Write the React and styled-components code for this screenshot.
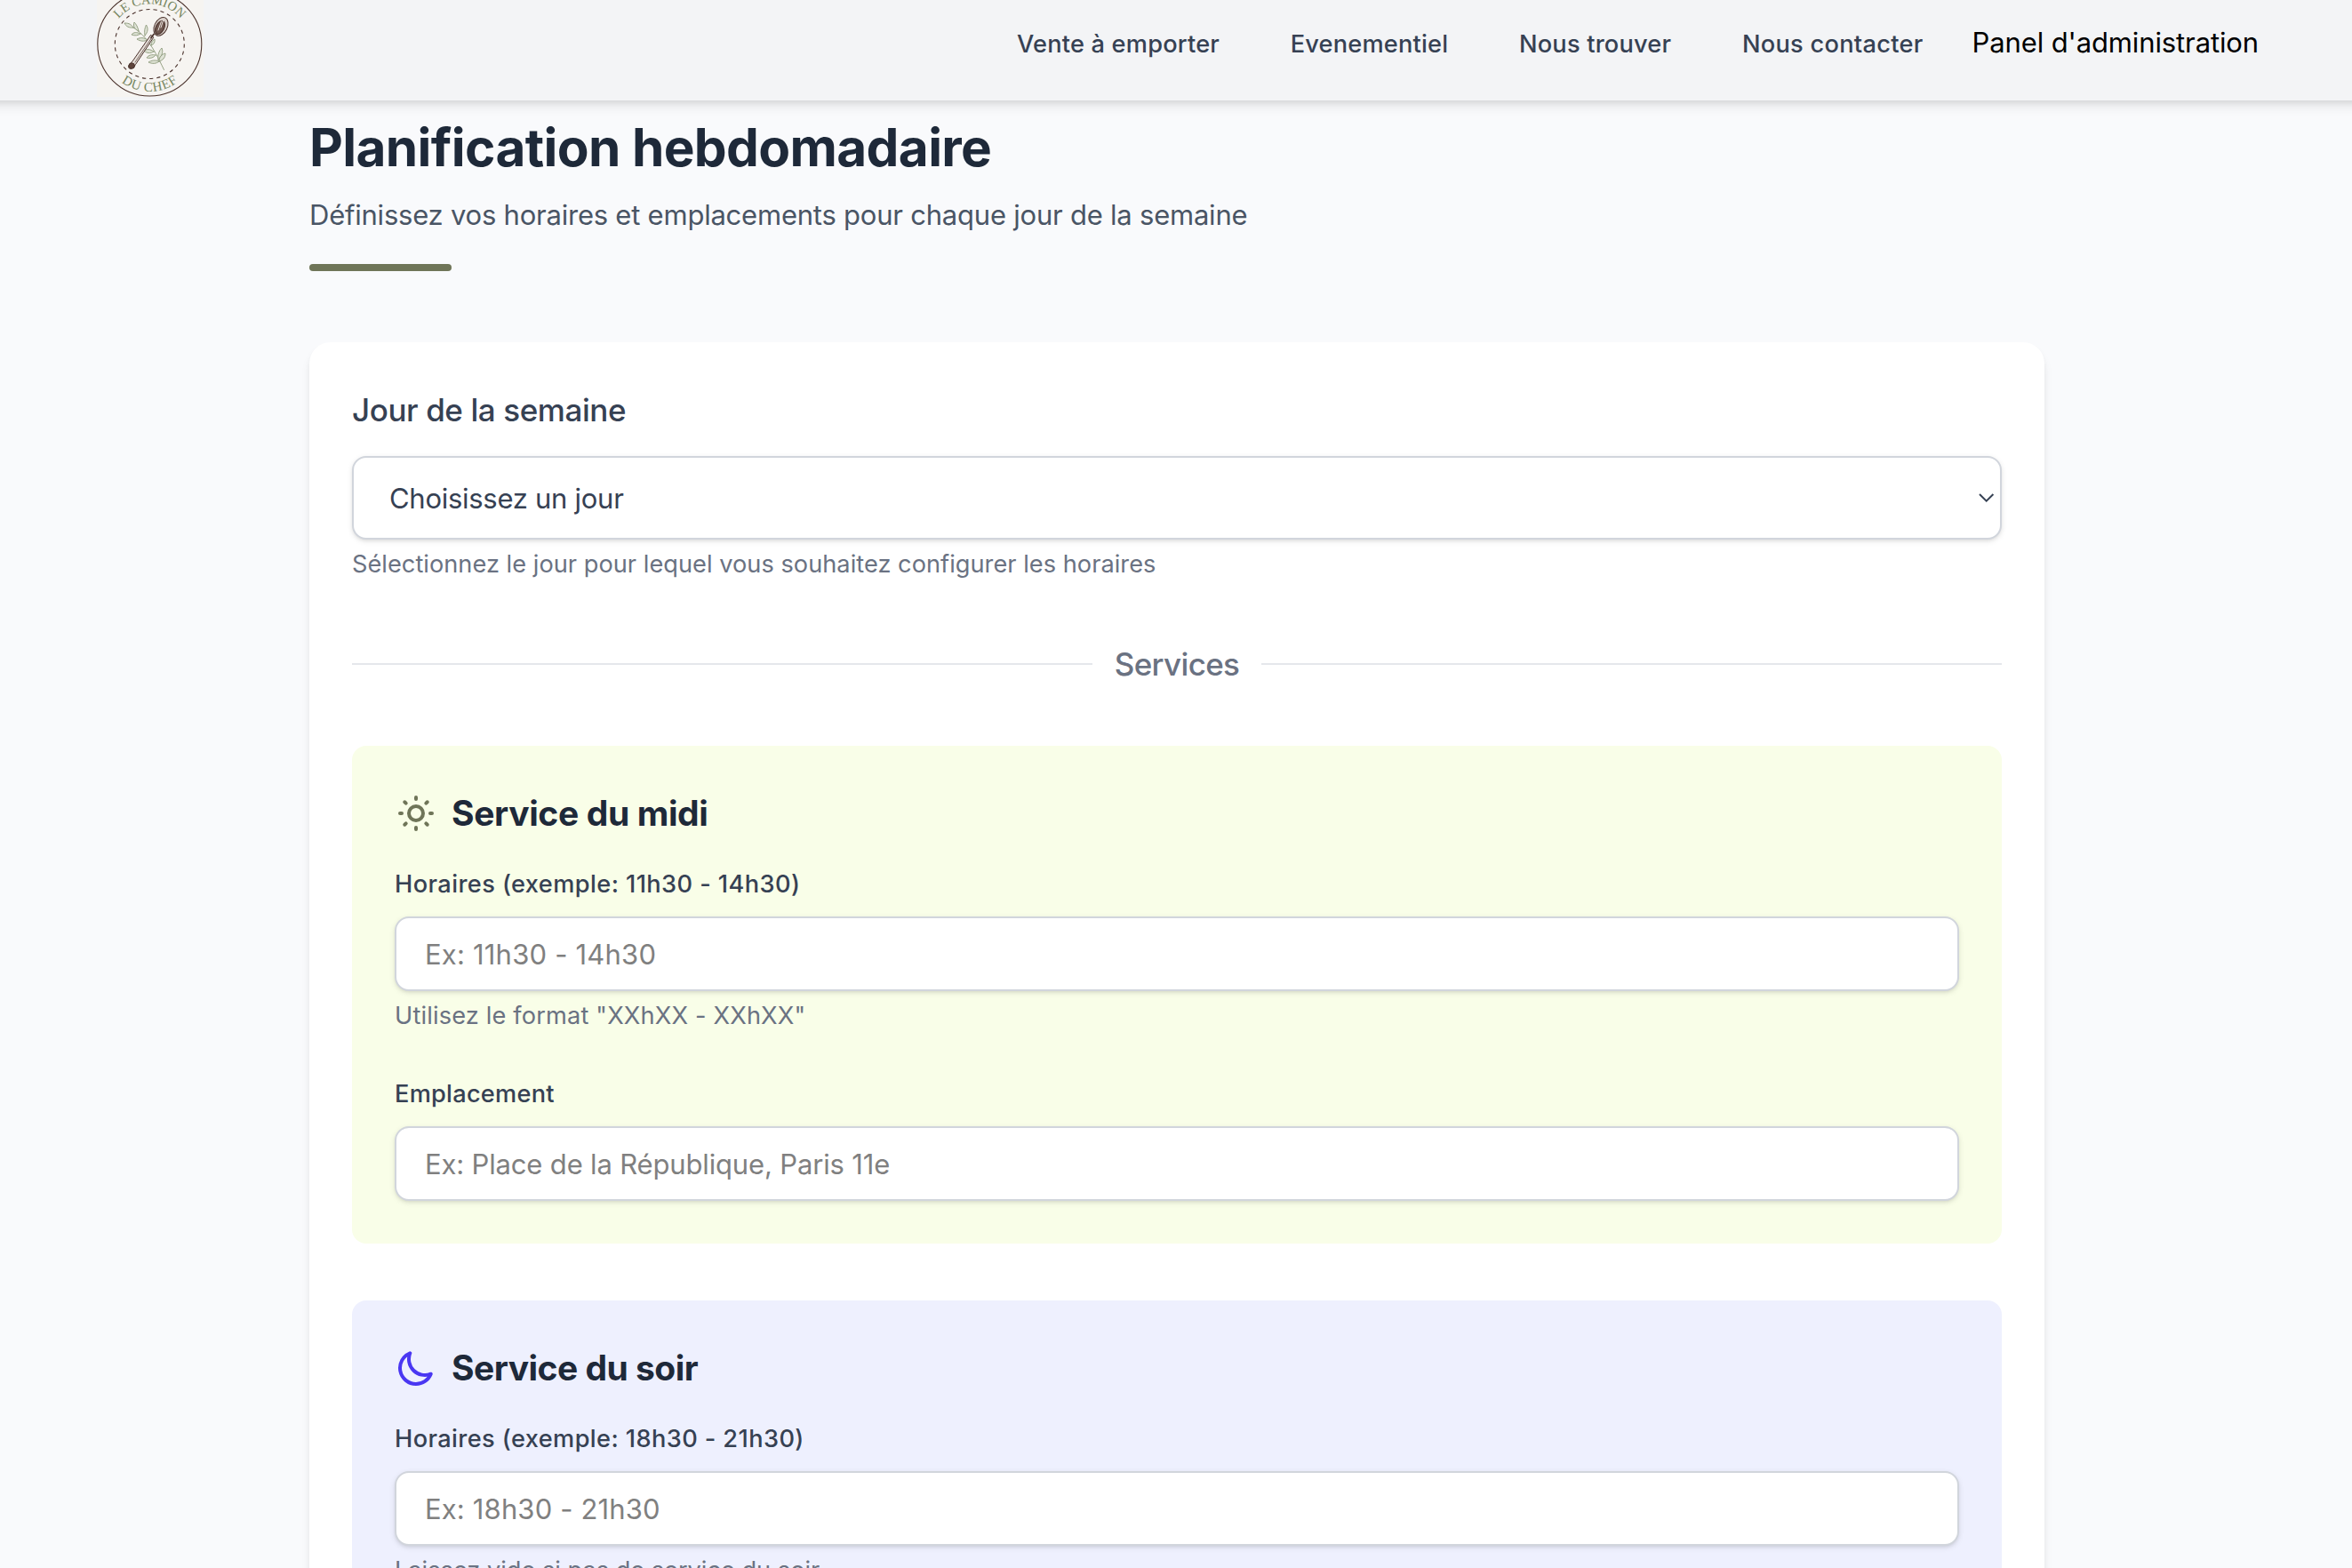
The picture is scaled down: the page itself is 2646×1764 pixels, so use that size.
import React from "react";
import styled, { createGlobalStyle } from "styled-components";

const GlobalStyle = createGlobalStyle`
  *, *::before, *::after { box-sizing: border-box; }
  body {
    margin: 0;
    background: #f9fafb;
    font-family: Inter, "Liberation Sans", sans-serif;
    color: #1e2939;
  }
  h1, h2, p { margin: 0; }
`;

const Page = styled.div`
  height: 1764px;
  overflow: hidden;
  background: #f9fafc;
`;

const Header = styled.header`
  display: flex;
  align-items: center;
  justify-content: space-between;
  position: relative;
  height: 128px;
  margin: -15px -20px 0;
  padding: 0 125px 0 129px;
  background: #f3f4f6;
  box-shadow: 0 8px 12px -2px rgba(0, 0, 0, 0.1), 0 4px 8px -4px rgba(0, 0, 0, 0.1);
`;

const LogoArt = styled.svg`
  display: block;
  flex: none;
  width: 120px;
  height: 120px;
`;

const Nav = styled.nav`
  display: flex;
  align-items: center;
  gap: 79.7px;
  white-space: nowrap;
`;

const NavLink = styled.a`
  padding-top: 1px;
  font-size: 27.2px;
  font-weight: 500;
  line-height: 40px;
  letter-spacing: ${(p) => p.$track}px;
  color: #364153;
`;

const AdminLink = styled.a`
  margin-left: -24.7px;
  padding-bottom: 2px;
  font-size: 31px;
  line-height: 48px;
  letter-spacing: -0.12px;
  color: #000;
`;

const Main = styled.main`
  padding: 17px 346px 0 348px;
`;

const Title = styled.h1`
  font-size: 58.5px;
  font-weight: 700;
  line-height: 72px;
  letter-spacing: -0.65px;
  color: #1e2939;
`;

const Subtitle = styled.p`
  margin-top: 15px;
  font-size: 31px;
  line-height: 49px;
  letter-spacing: -0.224px;
  color: #4a5565;
`;

const Accent = styled.div`
  width: 160px;
  height: 8px;
  margin: 31px 0 80px;
  border-radius: 4px;
  background: #6f7558;
`;

const Card = styled.section`
  padding: 48px;
  border-radius: 24px;
  background: #fff;
  box-shadow: 0 8px 12px -2px rgba(0, 0, 0, 0.1), 0 4px 8px -4px rgba(0, 0, 0, 0.1);
`;

const DayLabel = styled.div`
  font-size: 35px;
  font-weight: 500;
  line-height: 56px;
  letter-spacing: -0.411px;
  color: #364153;
`;

const DaySelect = styled.div`
  display: flex;
  align-items: center;
  justify-content: space-between;
  height: 94px;
  margin-top: 24px;
  padding: 0 6px 0 40px;
  border: 2px solid #d1d5dc;
  border-radius: 16px;
  background: #fff;
  box-shadow: 0 2px 6px rgba(0, 0, 0, 0.1), 0 2px 4px -2px rgba(0, 0, 0, 0.1);
  font-size: 31px;
  letter-spacing: -0.28px;
  color: #364153;
`;

const Hint = styled.p`
  margin-top: 8px;
  font-size: 27.2px;
  line-height: 40px;
  letter-spacing: ${(p) => p.$track}px;
  color: #6a7282;
`;

const Divider = styled.div`
  display: flex;
  align-items: center;
  gap: 24px;
  height: 56px;
  margin: 64px 0;
  font-size: 35px;
  font-weight: 500;
  letter-spacing: -0.65px;
  color: #6a7282;

  &::before, &::after {
    content: "";
    flex: 1;
    height: 2px;
    background: #e5e7eb;
  }

  span {
    width: 142px;
    text-align: center;
  }
`;

const Panel = styled.section`
  padding: 48px;
  border-radius: 16px;
  background: ${(p) => p.$tint};

  & + & { margin-top: 64px; }
`;

const PanelHeading = styled.div`
  display: flex;
  align-items: center;
  gap: 16px;
  height: 56px;
  margin-bottom: 32px;

  svg {
    width: 48px;
    height: 48px;
    stroke: ${(p) => p.$stroke};
  }
`;

const PanelTitle = styled.h2`
  font-size: 39px;
  font-weight: 700;
  line-height: 56px;
  letter-spacing: ${(p) => p.$track}px;
`;

const Field = styled.div`
  & + & { margin-top: 48px; }
`;

const FieldLabel = styled.label`
  display: block;
  font-size: 27.2px;
  font-weight: 500;
  line-height: 40px;
  letter-spacing: ${(p) => p.$track}px;
  color: #364153;
`;

const TextInput = styled.input`
  display: block;
  width: 100%;
  height: 84px;
  margin-top: 16px;
  padding: 0 32px;
  border: 2px solid #d1d5dc;
  border-radius: 16px;
  outline: none;
  background: #fff;
  box-shadow: 0 2px 6px rgba(0, 0, 0, 0.1), 0 2px 4px -2px rgba(0, 0, 0, 0.1);
  font-family: inherit;
  font-size: 31px;
  letter-spacing: ${(p) => p.$track}px;

  &::placeholder { color: #808080; opacity: 1; }
`;

function Logo() {
  return (
    <LogoArt viewBox="0 0 120 120" fill="none" aria-label="Le Camion du Chef">
      <defs>
        <path id="arc-top" d="M14.3 60.5A45 45 0 0 1 104.3 60.5" />
        <path id="arc-bottom" d="M5.8 60.5A53.5 53.5 0 0 0 112.8 60.5" />
      </defs>
      <rect width="120" height="120" fill="#f6f4f1" />
      <circle cx="59.3" cy="60.5" r="58.5" stroke="#4b332d" strokeWidth="1.1" />
      <circle cx="59.3" cy="60.5" r="39" stroke="#4b332d" strokeWidth="1.1" strokeDasharray="4.2 3.96" />
      <g fontFamily="'Liberation Serif', serif" fontSize="15" fill="#76865f" textAnchor="middle">
        <text textLength="80" fontSize="14.5"><textPath href="#arc-top" startOffset="50%" textLength="80">LE CAMION</textPath></text>
        <text textLength="68"><textPath href="#arc-bottom" startOffset="50%" textLength="68">DU CHEF</textPath></text>
      </g>
      <g stroke="#8c9a7b" strokeWidth="0.9" strokeLinecap="round" fill="#dfe3d6">
        <path d="M32 37.5C42 41 50 48 57 57S69 76 75.500 89.500" fill="none" />
        <path d="M41 42c-3-5-7-5-10-5 2 4 5 5.500 10 5z" />
        <path d="M47 46c-1-5-3-8-5-10-1.500 4 0 8 5 10z" />
        <path d="M49 49c-4-2-8-2-10 1 4 1.500 7 1 10-1z" />
        <path d="M54 51c-1-5 0-9 1.500-12 2.500 4 2 8-1.500 12z" />
        <path d="M57 56c-4-3-8-3-12-1 4 2.500 8 3 12 1z" />
        <path d="M61 62c0-4 2-6 4-7 .5 4-1 6-4 7z" />
        <path d="M64 69c-4-3-8-3-11-1 3 3 7 3.500 11 1z" />
        <path d="M66 73c-4-1-8 0-10 3 4 1 8 0 10-3z" />
        <path d="M69 78c-1-5 1-10 4-13 2 5 0 9-4 13z" />
        <path d="M70 80c0-5 3-8 7-9 0 5-3 8-7 9z" />
        <path d="M70 80c-4-2-9-1-12 1 4 2 9 2 12-1z" />
      </g>
      <g stroke="#4b332d" strokeLinecap="round">
        <path d="M63.500 53.500L43.500 83.500C41 88 37 90 35.800 87S38 82 40 80L60.500 50.500z" fill="#e6dfd9" strokeWidth="1" />
        <path d="M62 53L43 81" strokeWidth="0.7" />
        <ellipse cx="72" cy="40.800" rx="7.200" ry="11" transform="rotate(26 72 40.800)" fill="#d9d0ca" strokeWidth="1" />
        <ellipse cx="71" cy="42" rx="4.600" ry="8" transform="rotate(26 71 42)" fill="#6f5850" strokeWidth="1.200" />
        <path d="M75 33l-3 9M72.500 35l-3.500 10" stroke="#e6dfd9" strokeWidth="1" />
        <path d="M64 49.500l-3 4" strokeWidth="1.800" />
        <circle cx="39.300" cy="85" r="3.200" fill="#5d443c" strokeWidth="1" />
      </g>
    </LogoArt>
  );
}

function StrokeIcon({ d }) {
  return (
    <svg viewBox="0 0 24 24" fill="none" strokeWidth="2" strokeLinecap="round" strokeLinejoin="round">
      <path d={d} />
    </svg>
  );
}

const SUN =
  "M12 3v1m0 16v1m9-9h-1M4 12H3m15.364 6.364l-.707-.707M6.343 6.343l-.707-.707m12.728 0l-.707.707M6.343 17.657l-.707.707M16 12a4 4 0 11-8 0 4 4 0 018 0z";
const MOON =
  "M20.354 15.354A9 9 0 018.646 3.646 9.003 9.003 0 0012 21a9.003 9.003 0 008.354-5.646z";

const links = [
  { text: "Vente à emporter", track: 0.2 },
  { text: "Evenementiel", track: 0.2 },
  { text: "Nous trouver", track: 0.2 },
  { text: "Nous contacter", track: 0.28 },
];

const services = [
  {
    title: "Service du midi",
    titleTrack: -0.37,
    tint: "#f9fee8",
    stroke: "#6f7558",
    icon: SUN,
    hours: { label: "Horaires (exemple: 11h30 - 14h30)", track: 0.41 },
    example: { text: "Ex: 11h30 - 14h30", track: 0.2 },
    hint: { text: 'Utilisez le format "XXhXX - XXhXX"', track: 0.16 },
  },
  {
    title: "Service du soir",
    titleTrack: -0.52,
    tint: "#eef0fe",
    stroke: "#4a37f2",
    icon: MOON,
    hours: { label: "Horaires (exemple: 18h30 - 21h30)", track: 0.4 },
    example: { text: "Ex: 18h30 - 21h30", track: 0.15 },
    hint: { text: "Laissez vide si pas de service du soir", track: -0.008 },
  },
];

function ServicePanel({ service }) {
  return (
    <Panel $tint={service.tint}>
      <PanelHeading $stroke={service.stroke}>
        <StrokeIcon d={service.icon} />
        <PanelTitle $track={service.titleTrack}>{service.title}</PanelTitle>
      </PanelHeading>
      <Field>
        <FieldLabel $track={service.hours.track}>{service.hours.label}</FieldLabel>
        <TextInput placeholder={service.example.text} $track={service.example.track} />
        <Hint $track={service.hint.track}>{service.hint.text}</Hint>
      </Field>
      <Field>
        <FieldLabel $track={0.25}>Emplacement</FieldLabel>
        <TextInput placeholder="Ex: Place de la République, Paris 11e" $track={-0.16} />
      </Field>
    </Panel>
  );
}

export default function App() {
  return (
    <>
      <GlobalStyle />
      <Page>
        <Header>
          <Logo />
          <Nav>
            {links.map((l) => (
              <NavLink key={l.text} $track={l.track}>{l.text}</NavLink>
            ))}
            <AdminLink>Panel d'administration</AdminLink>
          </Nav>
        </Header>
        <Main>
          <Title>Planification hebdomadaire</Title>
          <Subtitle>Définissez vos horaires et emplacements pour chaque jour de la semaine</Subtitle>
          <Accent />
          <Card>
            <DayLabel>Jour de la semaine</DayLabel>
            <DaySelect>
              Choisissez un jour
              <svg width="20" height="12" viewBox="0 0 20 12" fill="none">
                <path d="M3 2l7.700 7.700L18.400 2" stroke="#364153" strokeWidth="2" />
              </svg>
            </DaySelect>
            <Hint $track={0.026}>Sélectionnez le jour pour lequel vous souhaitez configurer les horaires</Hint>
            <Divider><span>Services</span></Divider>
            {services.map((s) => (
              <ServicePanel key={s.title} service={s} />
            ))}
          </Card>
        </Main>
      </Page>
    </>
  );
}
